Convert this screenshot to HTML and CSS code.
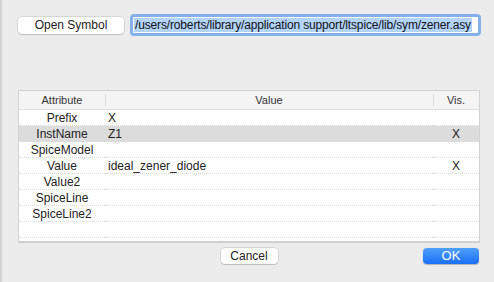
FILE: index.html
```html
<!DOCTYPE html>
<html lang="en">
<head>
    <meta charset="UTF-8">
    <title>Symbol Attributes</title>
    <link rel="stylesheet" href="styles.css">
</head>
<body>
    <div class="window">
        <div class="top-row">
            <button class="btn open-btn">Open Symbol</button>
            <div class="path-field">
                <span class="selected">/users/roberts/library/application support/ltspice/lib/sym/zener.asy</span>
            </div>
        </div>

        <div class="attr-box">
            <table class="attr-table">
                <thead>
                    <tr>
                        <th class="col-attr">Attribute</th>
                        <th class="col-value"><span class="sep"></span>Value</th>
                        <th class="col-vis"><span class="sep"></span>Vis.</th>
                    </tr>
                </thead>
                <tbody>
                    <tr><td class="name">Prefix</td><td>X</td><td class="vis"></td></tr>
                    <tr class="selected-row"><td class="name">InstName</td><td>Z1</td><td class="vis">X</td></tr>
                    <tr><td class="name">SpiceModel</td><td></td><td class="vis"></td></tr>
                    <tr><td class="name">Value</td><td>ideal_zener_diode</td><td class="vis">X</td></tr>
                    <tr><td class="name">Value2</td><td></td><td class="vis"></td></tr>
                    <tr><td class="name">SpiceLine</td><td></td><td class="vis"></td></tr>
                    <tr><td class="name">SpiceLine2</td><td></td><td class="vis"></td></tr>
                    <tr><td class="name"></td><td></td><td class="vis"></td></tr>
                    <tr><td class="name"></td><td></td><td class="vis"></td></tr>
                </tbody>
            </table>
        </div>

        <div class="footer">
            <span></span>
            <button class="btn cancel-btn">Cancel</button>
            <button class="btn ok-btn">OK</button>
        </div>
    </div>
</body>
</html>
```

FILE: styles.css
```css
html, body {
    margin: 0;
    padding: 0;
}
body {
    font-family: "Liberation Sans", Arial, sans-serif;
    font-size: 12px;
    color: #222;
    background: #ececec;
}
.window {
    box-sizing: border-box;
    width: 494px;
    height: 282px;
    border-left: 2px solid #d4d4d4;
    padding: 14px 13px 0 16px;
}
.top-row {
    display: flex;
    align-items: flex-start;
    gap: 6px;
    height: 22px;
}
.btn {
    font-family: inherit;
    font-size: 12px;
    border: none;
    border-radius: 4px;
    padding: 0;
    height: 17px;
    line-height: 17px;
    color: #222;
    background: #fff;
    box-shadow: 0 0 0 0.5px rgba(0,0,0,0.18), 0 1px 1px rgba(0,0,0,0.12);
}
.open-btn {
    width: 106px;
    margin-top: 3px;
}
.path-field {
    box-sizing: border-box;
    flex: 1;
    height: 22px;
    border: 3px solid #86b0ec;
    border-radius: 4px;
    background: #fff;
    padding: 0 1px;
    font-size: 12px;
    line-height: 16px;
    letter-spacing: -0.15px;
    white-space: nowrap;
    overflow: hidden;
}
.selected {
    background: #b3d4fc;
    color: #111;
    padding: 0 1px;
}
.attr-box {
    box-sizing: border-box;
    margin-top: 54px;
    height: 153px;
    width: 462px;
    border: 1px solid #d2d2d2;
    border-bottom: 2px solid #d0d0d0;
    background: #fff;
    overflow: hidden;
}
.attr-table {
    width: 100%;
    border-collapse: collapse;
    table-layout: fixed;
}
.attr-table th {
    position: relative;
    height: 18px;
    font-weight: normal;
    font-size: 11px;
    color: #333;
    background: #f4f4f4;
    border-bottom: 1px solid #dedede;
    padding: 0;
}
.sep {
    position: absolute;
    left: 0;
    top: 3px;
    bottom: 3px;
    width: 1px;
    background: #dcdcdc;
}
.col-attr {
    width: 86px;
}
.col-vis {
    width: 46px;
}
.attr-table td {
    height: 14px;
    padding: 1px 0 0 3px;
    border-bottom: 1px dotted #dadada;
    font-size: 12px;
    line-height: 14px;
    white-space: nowrap;
}
.attr-table td.name,
.attr-table td.vis {
    text-align: center;
    padding-left: 0;
}
.selected-row td {
    background: #dcdcdc;
}
.footer {
    display: grid;
    grid-template-columns: 1fr 57px 1fr;
    align-items: center;
    margin-top: 5px;
    width: 462px;
}
.cancel-btn {
    width: 57px;
    height: 16px;
    line-height: 16px;
}
.ok-btn {
    justify-self: end;
    width: 56px;
    height: 16px;
    line-height: 16px;
    margin-right: 1px;
    color: #fff;
    font-size: 13px;
    background: linear-gradient(#4fa0fd, #1a6ff4);
    box-shadow: 0 0.5px 1px rgba(0,0,0,0.25);
}
```
